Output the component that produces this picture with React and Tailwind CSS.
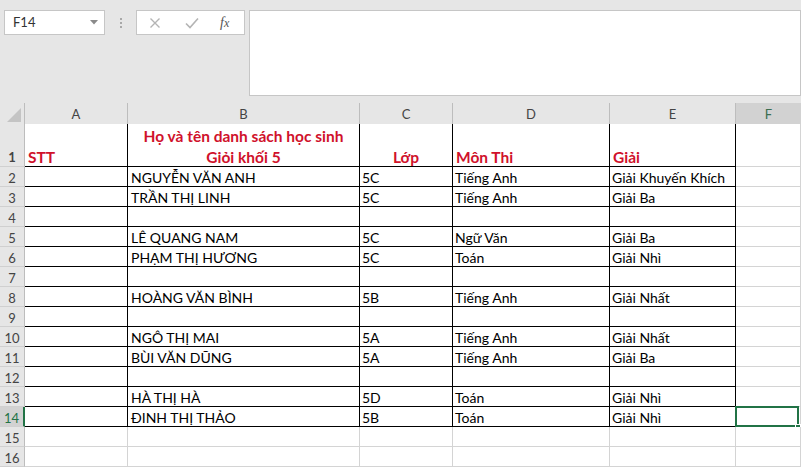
import React from "react";

const rows = [
  null,
  ["NGUYỄN VĂN ANH", "5C", "Tiếng Anh", "Giải Khuyến Khích"],
  ["TRẦN THỊ LINH", "5C", "Tiếng Anh", "Giải Ba"],
  ["", "", "", ""],
  ["LÊ QUANG NAM", "5C", "Ngữ Văn", "Giải Ba"],
  ["PHẠM THỊ HƯƠNG", "5C", "Toán", "Giải Nhì"],
  ["", "", "", ""],
  ["HOÀNG VĂN BÌNH", "5B", "Tiếng Anh", "Giải Nhất"],
  ["", "", "", ""],
  ["NGÔ THỊ MAI", "5A", "Tiếng Anh", "Giải Nhất"],
  ["BÙI VĂN DŨNG", "5A", "Tiếng Anh", "Giải Ba"],
  ["", "", "", ""],
  ["HÀ THỊ HÀ", "5D", "Toán", "Giải Nhì"],
  ["ĐINH THỊ THẢO", "5B", "Toán", "Giải Nhì"],
  ["", "", "", ""],
  ["", "", "", ""],
];

const GRID = "grid grid-cols-[25px_103px_232px_93px_157px_126px_1fr]";

function RowHead({ n, tall }) {
  const sel = n === 14;
  return (
    <div
      className={
        (tall ? "h-[43px] items-end pb-[0px] " : "h-[20px] items-start pt-[1px] leading-[20px] ") +
        (sel
          ? "bg-[#d2d2d2] border-r-2 border-r-[#217346] text-[#217346] "
          : "bg-[#e6e6e6] border-r border-r-[#bdbdbd] text-[#444] ") +
        "flex justify-center border-b border-b-[#d0d0d0] text-[13px]"
      }
    >
      <span className={tall ? "translate-y-[1px] leading-[20px]" : ""}>{n}</span>
    </div>
  );
}

function Cell({ children, inTable, tall, className = "" }) {
  return (
    <div
      className={
        (tall ? "h-[43px] " : "h-[20px] pt-[2px] ") +
        (inTable
          ? "border-r border-b border-r-black border-b-black "
          : "border-r border-b border-r-[#d4d4d4] border-b-[#d4d4d4] ") +
        "bg-white overflow-visible whitespace-nowrap " +
        className
      }
    >
      {children}
    </div>
  );
}

export default function App() {
  return (
    <div
      className="w-[801px] h-[467px] overflow-hidden bg-[#e6e6e6] flex flex-col"
      style={{ fontFamily: "Lato, 'Noto Sans', sans-serif" }}
    >
      {/* Formula bar area */}
      <div className="h-[105px] flex items-start pt-[10px] pl-[4px]">
        <div className="w-[101px] h-[25px] bg-white border border-[#c6c6c6] flex items-center justify-between pl-[8px] pr-[6px] text-[13px] text-[#333]">
          <span>F14</span>
          <svg width="8" height="5" viewBox="0 0 8 5">
            <polygon points="0,0 8,0 4,4.5" fill="#8a8a8a" />
          </svg>
        </div>
        <div className="w-[31px] h-[25px] flex flex-col items-center justify-center gap-[2px]">
          <span className="w-[2px] h-[2px] bg-[#a8a8a8]" />
          <span className="w-[2px] h-[2px] bg-[#a8a8a8]" />
          <span className="w-[2px] h-[2px] bg-[#a8a8a8]" />
        </div>
        <div className="w-[109px] h-[25px] bg-white border border-[#c6c6c6] flex items-center">
          <svg className="ml-[12px]" width="12" height="12" viewBox="0 0 12 12">
            <path d="M1.5 1.5 L10.5 10.5 M10.5 1.5 L1.5 10.5" stroke="#b4b4b4" strokeWidth="1.4" />
          </svg>
          <svg className="ml-[24px]" width="14" height="12" viewBox="0 0 14 12">
            <path d="M1 6.5 L5 10.5 L13 1.5" stroke="#b4b4b4" strokeWidth="1.6" fill="none" />
          </svg>
          <span
            className="ml-[21px] text-[14px] italic text-[#555]"
            style={{ fontFamily: "'Liberation Serif', serif" }}
          >
            f<span className="text-[12px]">x</span>
          </span>
        </div>
        <div className="ml-[4px] flex-1 h-[86px] bg-white border border-[#c6c6c6]" />
      </div>

      {/* Column headers */}
      <div className={GRID + " h-[21px] leading-[20px]"}>
        <div className="bg-[#e6e6e6] border-r border-r-[#bdbdbd] border-b border-b-[#bdbdbd] flex items-end justify-end pr-[3px] pb-[3px]">
          <svg width="14" height="14" viewBox="0 0 14 14">
            <polygon points="14,0 14,14 0,14" fill="#c4c4c4" />
          </svg>
        </div>
        {["A", "B", "C", "D", "E"].map((c) => (
          <div
            key={c}
            className="bg-[#e6e6e6] border-r border-r-[#bdbdbd] border-b border-b-[#bdbdbd] flex items-start pt-[1px] justify-center text-[13px] text-[#444]"
          >
            {c}
          </div>
        ))}
        <div className="bg-[#d2d2d2] border-b-2 border-b-[#217346] flex items-start pt-[1px] justify-center text-[13px] text-[#3b6e50]">
          F
        </div>
      </div>

      {/* Row 1 */}
      <div className={GRID + " text-[15.5px] font-bold text-[#d0112b] leading-[21px]"}>
        <RowHead n={1} tall />
        <Cell inTable tall className="flex items-end pl-[3px]">
          <span className="translate-y-[2px]">STT</span>
        </Cell>
        <Cell inTable tall className="flex flex-col items-center justify-end">
          <span className="translate-y-[2px]">Họ và tên danh sách học sinh</span>
          <span className="translate-y-[2px]">Giỏi khối 5</span>
        </Cell>
        <Cell inTable tall className="flex items-end justify-center">
          <span className="translate-y-[2px]">Lớp</span>
        </Cell>
        <Cell inTable tall className="flex items-end pl-[3px]">
          <span className="translate-y-[2px]">Môn Thi</span>
        </Cell>
        <Cell inTable tall className="flex items-end pl-[3px]">
          <span className="translate-y-[2px]">Giải</span>
        </Cell>
        <Cell tall />
      </div>

      {/* Rows 2..16 */}
      {rows.slice(1).map((r, i) => {
        const n = i + 2;
        const inT = n <= 14;
        return (
          <div key={n} className={GRID + " text-[14px] text-black leading-[18px]"}>
            <RowHead n={n} />
            <Cell inTable={inT} />
            <Cell inTable={inT} className="pl-[3px]">{r[0]}</Cell>
            <Cell inTable={inT} className="pl-[2px]">{r[1]}</Cell>
            <Cell inTable={inT} className="pl-[2px]">{r[2]}</Cell>
            <Cell inTable={inT} className="pl-[2px]">{r[3]}</Cell>
            <Cell className="relative">
              {n === 14 && (
                <>
                  <div className="absolute -left-[1px] -top-[1px] right-[1px] -bottom-[1px] border-2 border-[#217346]" />
                  <div className="absolute -right-[1px] -bottom-[4px] w-[6px] h-[6px] bg-[#217346] border border-white" />
                </>
              )}
            </Cell>
          </div>
        );
      })}
    </div>
  );
}
